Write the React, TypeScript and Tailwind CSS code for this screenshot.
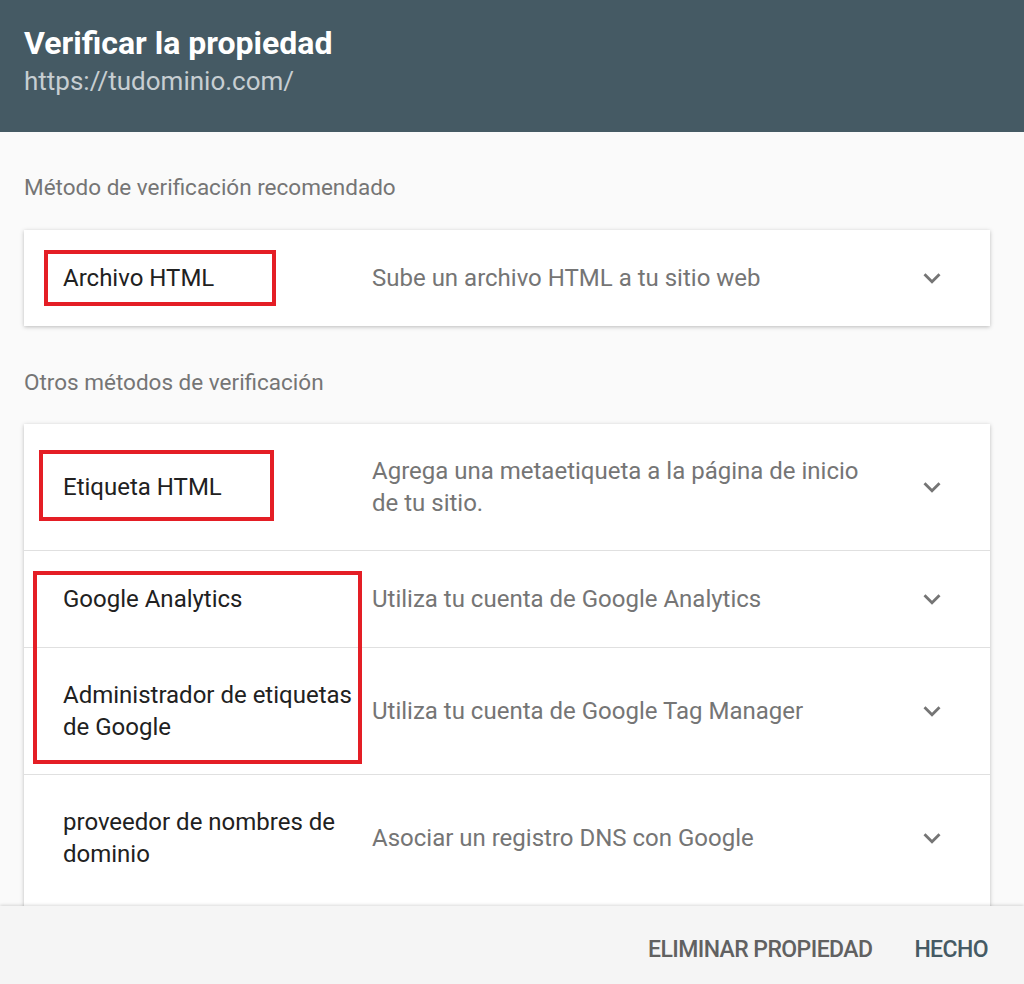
import React from 'react';

interface Method {
  name: string;
  description: string;
}

const recommended: Method = {
  name: 'Archivo HTML',
  description: 'Sube un archivo HTML a tu sitio web',
};

const others: Method[] = [
  { name: 'Etiqueta HTML', description: 'Agrega una metaetiqueta a la página de inicio de tu sitio.' },
  { name: 'Google Analytics', description: 'Utiliza tu cuenta de Google Analytics' },
  { name: 'Administrador de etiquetas de Google', description: 'Utiliza tu cuenta de Google Tag Manager' },
  { name: 'proveedor de nombres de dominio', description: 'Asociar un registro DNS con Google' },
];

const ExpandIcon = () => (
  <svg width="34" height="34" viewBox="0 0 24 24" fill="#757575">
    <path d="M16.59 8.59L12 13.17 7.41 8.59 6 10l6 6 6-6z" />
  </svg>
);

const MethodRow: React.FC<{ method: Method; last?: boolean }> = ({ method, last }) => (
  <div
    className={`flex items-center pl-[39px] pr-[41px] py-[31px] leading-[32px] text-[24px] ${
      last ? '' : 'border-b border-[#e0e0e0]'
    }`}
  >
    <div className="w-[309px] shrink-0 text-[#212121] pr-2">{method.name}</div>
    <div className="flex-1 text-[#757575] pr-[40px]">{method.description}</div>
    <ExpandIcon />
  </div>
);

// Marcos rojos de anotación sobre la captura
const Highlight: React.FC<{ className: string }> = ({ className }) => (
  <div className={`absolute border-[4px] border-[#e41e25] pointer-events-none ${className}`} />
);

export default function App() {
  return (
    <div
      className="relative h-[984px] w-[1024px] flex flex-col bg-[#fafafa] overflow-hidden"
      style={{ fontFamily: 'Roboto, "Liberation Sans", sans-serif' }}
    >
      {/* Encabezado */}
      <div className="h-[132px] shrink-0 bg-[#455a64] px-6 pt-[24px]">
        <h1 className="text-[32px] leading-[38px] font-bold text-white">Verificar la propiedad</h1>
        <p className="text-[26px] leading-[32px] text-[#c7ced2] mt-[3px]">https://tudominio.com/</p>
      </div>

      <div className="flex-1 overflow-hidden pl-6 pr-[34px]">
        <p className="text-[22.5px] leading-[28px] text-[#757575] pt-[41px] pb-[29px]">
          Método de verificación recomendado
        </p>
        <div className="bg-white shadow-[0_1px_4px_rgba(0,0,0,0.25)]">
          <MethodRow method={recommended} last />
        </div>

        <p className="text-[22.5px] leading-[28px] text-[#757575] pt-[42px] pb-[28px]">
          Otros métodos de verificación
        </p>
        <div className="bg-white shadow-[0_1px_4px_rgba(0,0,0,0.25)] pb-[20px]">
          {others.map((m, i) => (
            <MethodRow key={m.name} method={m} last={i === others.length - 1} />
          ))}
        </div>
      </div>

      {/* Pie */}
      <div className="h-[78px] shrink-0 bg-[#f5f5f5] shadow-[0_-1px_3px_rgba(0,0,0,0.15)] flex items-center justify-end gap-[42px] pr-[36px] pt-[10px] z-10">
        <button className="text-[23px] font-medium text-[#616161] tracking-tight">ELIMINAR PROPIEDAD</button>
        <button className="text-[23px] font-medium text-[#455a64] tracking-tight">HECHO</button>
      </div>

      <Highlight className="left-[44px] top-[250px] w-[232px] h-[56px]" />
      <Highlight className="left-[39px] top-[450px] w-[235px] h-[71px]" />
      <Highlight className="left-[33px] top-[571px] w-[329px] h-[193px]" />
    </div>
  );
}
